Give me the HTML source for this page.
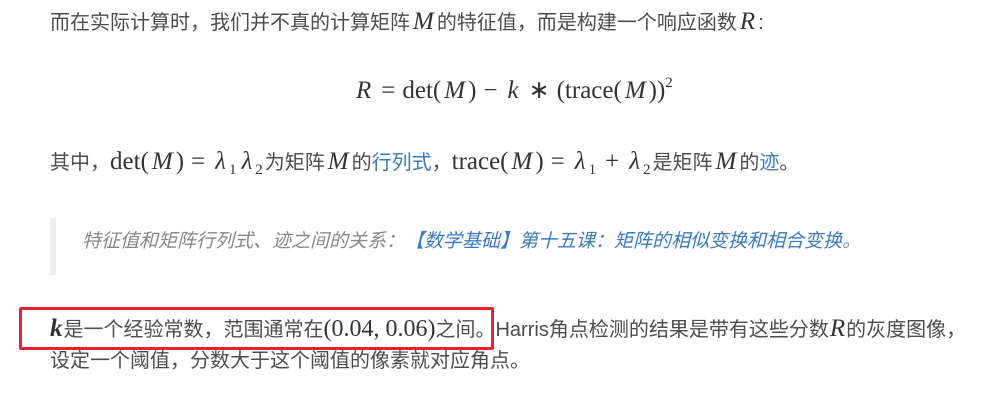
<!DOCTYPE html>
<html><head><meta charset="utf-8"><style>
html,body{margin:0;padding:0;background:#fff;width:991px;height:403px;overflow:hidden;}
body{position:relative;font-family:"Liberation Sans","Noto Sans CJK SC",sans-serif;color:#4d4d4d;font-size:20px;}
.l{position:absolute;left:50px;white-space:nowrap;line-height:32px;}
.m{font-family:"Liberation Serif",serif;font-style:italic;font-size:25px;color:#333;margin:0 3px;}
.r{font-family:"Liberation Serif",serif;font-size:25px;color:#333;}
.o{font-family:"Liberation Serif",serif;font-size:25px;color:#333;margin:0 7px;}
a{color:#3a7bbf;text-decoration:none;}
sub{font-size:15px;vertical-align:-5px;line-height:0;font-family:"Liberation Serif",serif;color:#333;margin-right:2px;}
sup{font-size:15px;vertical-align:11px;line-height:0;}
</style></head><body>
<div class="l" style="top:6px">而在实际计算时，我们并不真的计算矩阵<span class="m">M</span>的特征值，而是构建一个响应函数<span class="m">R</span>:</div>
<div class="l" style="top:75px;left:356px"><span class="m" style="margin-left:0">R</span><span class="o">=</span><span class="r">det(</span><span class="m">M</span><span class="r">)</span><span class="o">−</span><span class="m">k</span><span class="o">∗</span><span class="r">(trace(</span><span class="m">M</span><span class="r">))<sup>2</sup></span></div>
<div class="l" style="top:146px">其中，<span class="r">det(</span><span class="m">M</span><span class="r">)</span><span class="o">=</span><span class="m">λ</span><sub>1</sub><span class="m">λ</span><sub>2</sub>为矩阵<span class="m">M</span>的<a>行列式</a>，<span class="r">trace(</span><span class="m">M</span><span class="r">)</span><span class="o">=</span><span class="m">λ</span><sub>1</sub><span class="o">+</span><span class="m">λ</span><sub>2</sub>是矩阵<span class="m">M</span>的<a>迹</a>。</div>
<div style="position:absolute;left:50px;top:218px;width:6px;height:57px;background:#eee"></div>
<div class="l" style="top:226px;left:82px;font-style:italic;color:#888;font-size:19px;">特征值和矩阵行列式、迹之间的关系：<a>【数学基础】第十五课：矩阵的相似变换和相合变换</a>。</div>
<div style="position:absolute;left:19px;top:307px;width:469px;height:37px;border:3px solid #e8212b;border-radius:2px"></div>
<div class="l" style="top:313px"><span class="m" style="font-weight:bold;margin:0 1px 0 0">k</span>是一个经验常数，范围通常在<span class="r" style="font-size:24px">(0.04, 0.06)</span>之间。Harris角点检测的结果是带有这些分数<span class="m" style="margin:0 1px">R</span>的灰度图像，</div>
<div class="l" style="top:345px">设定一个阈值，分数大于这个阈值的像素就对应角点。</div>
</body></html>
